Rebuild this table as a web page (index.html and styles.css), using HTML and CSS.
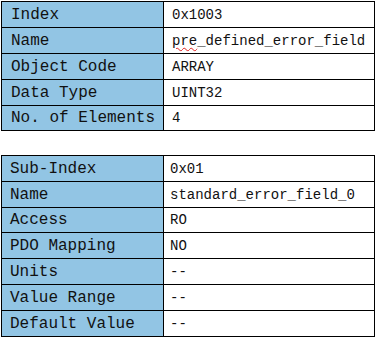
FILE: index.html
```html
<!DOCTYPE html>
<html>
<head>
<meta charset="utf-8">
<link rel="stylesheet" href="styles.css">
</head>
<body>
<div class="page">
  <table class="spec spec-top">
    <tr><td class="label label-first">Index</td><td class="value">0x1003</td></tr>
    <tr><td class="label">Name</td><td class="value"><span class="typo">pre</span>_defined_error_field</td></tr>
    <tr><td class="label">Object Code</td><td class="value">ARRAY</td></tr>
    <tr><td class="label">Data Type</td><td class="value">UINT32</td></tr>
    <tr class="short"><td class="label">No. of Elements</td><td class="value">4</td></tr>
  </table>
  <table class="spec spec-sub">
    <tr><td class="label">Sub-Index</td><td class="value">0x01</td></tr>
    <tr><td class="label">Name</td><td class="value">standard_error_field_0</td></tr>
    <tr class="short"><td class="label">Access</td><td class="value">RO</td></tr>
    <tr><td class="label">PDO Mapping</td><td class="value">NO</td></tr>
    <tr><td class="label">Units</td><td class="value">--</td></tr>
    <tr><td class="label">Value Range</td><td class="value">--</td></tr>
    <tr><td class="label">Default Value</td><td class="value">--</td></tr>
  </table>
</div>
</body>
</html>
```
FILE: styles.css
```css
html, body {
  margin: 0;
  padding: 0;
  background: #ffffff;
}
.page {
  padding: 1px 0 0 1px;
  display: flex;
  flex-direction: column;
  gap: 24px;
}
.spec {
  border-collapse: collapse;
  width: 374px;
  table-layout: fixed;
}
.spec td {
  box-sizing: border-box;
  border: 1px solid #000;
  padding: 0;
  height: 26px;
  white-space: nowrap;
  overflow: hidden;
  color: #111;
}
.spec tr.short td {
  height: 25px;
}
.label {
  width: 162px;
  background: #92c5e4;
  font-family: "Liberation Mono", "DejaVu Sans Mono", monospace;
  font-size: 16px;
  padding-left: 8px !important;
}
.spec-top .label {
  padding-left: 9px !important;
}
.label-first {
  padding-left: 11px !important;
}
.value {
  background: #fff;
  font-family: "Liberation Mono", "DejaVu Sans Mono", monospace;
  font-size: 14px;
  padding-left: 6px !important;
}
.spec-top .value {
  padding-left: 8px !important;
}
.typo {
  text-decoration: underline wavy #e02020;
  text-decoration-thickness: 1px;
  text-underline-offset: 2px;
}
```
